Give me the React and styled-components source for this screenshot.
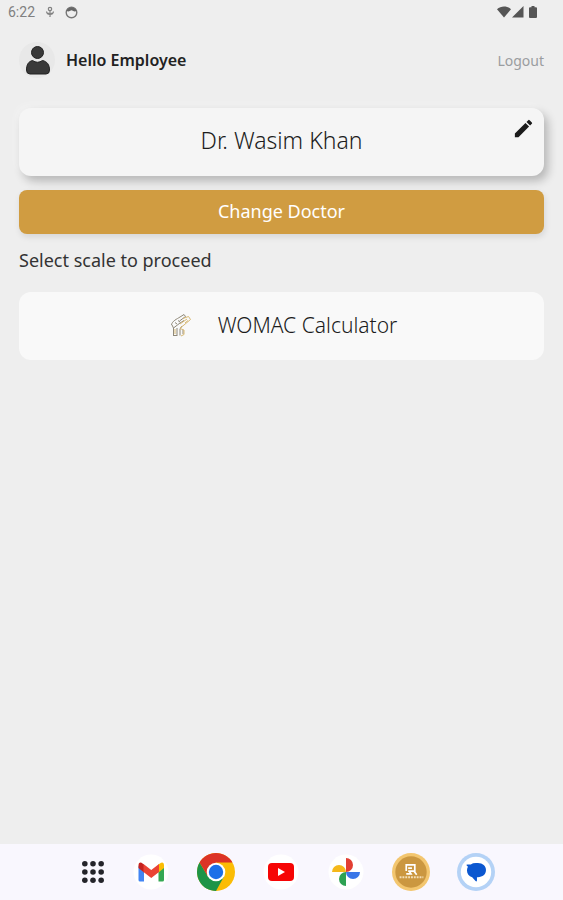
import styled, { createGlobalStyle } from 'styled-components';

const GlobalStyle=createGlobalStyle`
  * {
    box-sizing:border-box;
  }
  body {
    margin:0;
    background-color:#eeeeee;
    font-family:'Noto Sans', sans-serif;
    color:#333333;
  }
  button {
    font-family:inherit;
    color:inherit;
    border:none;
    padding:0;
    cursor:pointer;
  }
  svg {
    display:block;
  }
`
const Page=styled.div`
  min-height:100vh;
  display:flex;
  flex-direction:column;
`
const StatusBar=styled.div`
  height:24px;
  padding:0 26px 0 8px;
  display:flex;
  align-items:center;
  justify-content:space-between;
  font-family:Roboto, sans-serif;
  font-size:14px;
  color:#808080;
`
const StatusGroup=styled.div`
  display:flex;
  align-items:center;
  gap:${props=>props.$gap}px;
`
const Header=styled.header`
  height:72px;
  padding:0 19px;
  display:flex;
  align-items:center;
`
const Avatar=styled.div`
  width:36px;
  height:36px;
  border-radius:50%;
  background-color:#e8e8e8;
`
const Greeting=styled.h1`
  margin:0 auto 0 11px;
  font-size:16px;
  font-weight:600;
  color:#222222;
`
const Logout=styled.button`
  background:none;
  font-size:14px;
  color:#9a9da0;
`
const Main=styled.main`
  padding:12px 19px;
  display:flex;
  flex-direction:column;
`
const DoctorCard=styled.section`
  position:relative;
  height:68px;
  padding-bottom:4px;
  display:flex;
  align-items:center;
  justify-content:center;
  border-radius:12px;
  background-color:#f5f5f5;
  box-shadow:4px 5px 10px rgba(0,0,0,0.24), -3px -3px 8px rgba(255,255,255,0.3);
`
const DoctorName=styled.h2`
  margin:0;
  font-size:23px;
  font-weight:300;
  color:#1c1c1c;
`
const EditButton=styled.button`
  position:absolute;
  top:9px;
  right:9px;
  background:none;
`
const ChangeButton=styled.button`
  height:44px;
  padding-bottom:2px;
  margin-top:14px;
  border-radius:8px;
  background-color:#d09c41;
  color:white;
  font-size:18px;
  box-shadow:1px 3px 6px rgba(0,0,0,0.1);
`
const Prompt=styled.p`
  margin:12px 0 18px;
  font-size:18px;
  line-height:28px;
`
const ScaleButton=styled.button`
  height:68px;
  display:flex;
  align-items:center;
  justify-content:center;
  gap:26px;
  padding:0 0 2px 4px;
  border-radius:12px;
  background-color:#f9f9f9;
  font-size:21px;
  font-weight:300;
  color:#1c1c1c;
`
const Dock=styled.nav`
  height:56px;
  margin-top:auto;
  padding-left:13px;
  display:flex;
  align-items:center;
  justify-content:center;
  gap:27px;
  background-color:#f9f7fe;
`
const DockButton=styled.button`
  background:none;
`

function MicIcon() {
  return (
    <svg width="10" height="12" viewBox="0 0 10 12" fill="none" stroke="#808080">
      <circle cx="5" cy="3" r="1.7" strokeWidth="1.2"/>
      <path d="M5 5v6M1.5 5.5c.3 2 1.5 3 3.500 3s3.200-1 3.500-3M3 7l2 1.800L7 7" strokeWidth="1.200"/>
    </svg>
  );
}

function FaceIcon() {
  return (
    <svg width="13" height="13" viewBox="0 0 13 13">
      <circle cx="6.500" cy="6.500" r="5.300" fill="none" stroke="#777777" strokeWidth="1.400"/>
      <path d="M1.500 5A5.300 5.300 0 0 1 11.500 5L9.500 5.500 6.500 4.200 3.500 5.500z" fill="#666666"/>
    </svg>
  );
}

function WifiIcon() {
  return (
    <svg width="14" height="12" viewBox="0 0 14 12">
      <path d="M0 3.200C4 -.4 10 -.4 14 3.200L7 11.500z" fill="#555555"/>
    </svg>
  );
}

function SignalIcon() {
  return (
    <svg width="12" height="12" viewBox="0 0 12 12">
      <path d="M11.500 0v11.500H0z" fill="#555555"/>
    </svg>
  );
}

function BatteryIcon() {
  return (
    <svg width="12" height="12" viewBox="-4 0 12 12">
      <path d="M2.500 0h3v1.300h1.500q1 0 1 1v8.700q0 1-1 1H1q-1 0-1-1V2.300q0-1 1-1h1.500z" fill="#555555"/>
    </svg>
  );
}

function UserIcon() {
  return (
    <svg width="36" height="36" viewBox="0 0 36 36" fill="#393939" stroke="#222222">
      <circle cx="18.500" cy="10.500" r="6"/>
      <path d="M13.500 18.500Q18.500 22 23.500 18.500C28 19.500 30.500 22.500 30.500 28Q30.500 32 27 32H11Q7.500 32 7.500 28C7.500 22.500 9.500 19.500 13.500 18.500z"/>
    </svg>
  );
}

function PencilIcon() {
  return (
    <svg width="23" height="23" viewBox="0 0 24 24" fill="#1b1b1b">
      <path d="M3 17.250V21h3.750L17.810 9.940l-3.750-3.750zM20.710 7.040a1 1 0 0 0 0-1.410l-2.340-2.340a1 1 0 0 0-1.410 0l-1.830 1.830 3.750 3.750z"/>
    </svg>
  );
}

function JointIcon() {
  return (
    <svg width="22" height="24" viewBox="0 0 22 24" fill="none" strokeWidth="1">
      <g stroke="#8f8878">
        <path d="M1.500 12C2 8 7 6 10 4l4-2.500 1.500 2-6 4.500"/>
        <path d="M2 12l1.500 3L10 10l4-2.500M3.500 15v7.500M7 15v8M3 22.500h4"/>
        <path d="M5 9.500l2 1.500M8 7.500l2 1.500M12 13l-2 3v6.500M13 17v4"/>
      </g>
      <g stroke="#d8b974">
        <path d="M13 5.500l5.500-2 2 3L14 12l-4 3M10 11l7-5M5 16v5"/>
        <path d="M10 15.500l4 1.500v4.500l-3 1.500M15 10l3-2.500"/>
      </g>
    </svg>
  );
}

function AppsIcon() {
  const steps=[4, 12.5, 21];
  return (
    <svg width="24" height="24" viewBox="0 0 25 25" fill="#24242a">
      {steps.map(y=>steps.map(x=><circle key={x+'-'+y} cx={x} cy={y} r="2.900"/>))}
    </svg>
  );
}

function GmailIcon() {
  return (
    <svg width="38" height="38" viewBox="0 0 38 38">
      <circle cx="19" cy="19" r="17.500" fill="white"/>
      <path d="M6.500 13v14q0 1.500 1.500 1.500h4V16z" fill="#4285f4"/>
      <path d="M32 13v14q0 1.500-1.500 1.500h-4V16z" fill="#34a853"/>
      <path d="M26.500 11.500L29 9.700q3-1.200 3 2.300v3l-5.500 4.500z" fill="#fbbc04"/>
      <path d="M6.500 12q0-3.500 3-2.300L12 11.500v8L6.500 15z" fill="#c5221f"/>
      <path d="M11.500 11l7.750 6L27 11v8l-7.750 6L11.500 19z" fill="#ea4335"/>
    </svg>
  );
}

function ChromeIcon() {
  return (
    <svg width="38" height="38" viewBox="0 0 38 38">
      <circle cx="19" cy="19" r="19" fill="#fbbc05"/>
      <path d="M2.550 9.500A19 19 0 0 0 19 38L27 23.600 11 23.600z" fill="#1e9447"/>
      <path d="M2.550 9.500A19 19 0 0 1 35.450 9.500H19L11 23.600z" fill="#dc3326"/>
      <circle cx="19" cy="19" r="9.300" fill="white"/>
      <circle cx="19" cy="19" r="7.200" fill="#1b6fe8"/>
    </svg>
  );
}

function YoutubeIcon() {
  return (
    <svg width="38" height="38" viewBox="0 0 38 38">
      <circle cx="19" cy="19" r="17.500" fill="white"/>
      <rect x="6" y="10" width="26" height="18" rx="4" fill="#f60505"/>
      <path d="M16 15l7 4-7 4z" fill="white"/>
    </svg>
  );
}

function PhotosIcon() {
  return (
    <svg width="38" height="38" viewBox="0 0 38 38">
      <circle cx="19" cy="19" r="17.500" fill="white"/>
      <path d="M19 5a7 7 0 0 1 0 14z" fill="#e23e32"/>
      <path d="M33 19a7 7 0 0 1-14 0z" fill="#3976e8"/>
      <path d="M19 33a7 7 0 0 1 0-14z" fill="#2da253"/>
      <path d="M5 19a7 7 0 0 1 14 0z" fill="#f5b81a"/>
    </svg>
  );
}

function ScalesAppIcon() {
  return (
    <svg width="38" height="38" viewBox="0 0 40 40">
      <circle cx="20" cy="20" r="20" fill="#f3c66f"/>
      <circle cx="20" cy="20" r="16.500" fill="#cb9740"/>
      <path d="M15 19v-6.500h9v6.500h-7M17 16h4M23 19l3 4M15 22h5l-2-3" fill="none" stroke="white" strokeWidth="1.800"/>
      <path d="M8 25.500h25" stroke="#f3dfb8" strokeWidth="2.200" strokeDasharray="2 1"/>
    </svg>
  );
}

function MessagesIcon() {
  return (
    <svg width="38" height="38" viewBox="0 0 40 40">
      <circle cx="20" cy="20" r="20" fill="#b4d2f6"/>
      <circle cx="20" cy="20" r="16" fill="white"/>
      <path d="M11.500 14.500L10 13Q9.500 12 11 12h3.500Q16.500 10.500 20 10.500h2C27 10.500 30.500 13.500 30.500 18C30.500 22.500 27 25.500 22 25.500h-1v3.500q-.3 1.500-1.500.5L16 25.500C12.500 24.500 10.500 22 10.500 18.500Q10.500 16 11.500 14.500z" fill="#0b57d0"/>
    </svg>
  );
}

const apps=[
  { label:'All apps', Icon:AppsIcon },
  { label:'Gmail', Icon:GmailIcon },
  { label:'Chrome', Icon:ChromeIcon },
  { label:'YouTube', Icon:YoutubeIcon },
  { label:'Photos', Icon:PhotosIcon },
  { label:'Scales', Icon:ScalesAppIcon },
  { label:'Messages', Icon:MessagesIcon },
];

function App() {
  return (
    <Page>
      <GlobalStyle/>
      <StatusBar>
        <StatusGroup $gap={10}>
          <span>6:22</span>
          <MicIcon/>
          <FaceIcon/>
        </StatusGroup>
        <StatusGroup $gap={1}>
          <WifiIcon/>
          <SignalIcon/>
          <BatteryIcon/>
        </StatusGroup>
      </StatusBar>
      <Header>
        <Avatar><UserIcon/></Avatar>
        <Greeting>Hello Employee</Greeting>
        <Logout>Logout</Logout>
      </Header>
      <Main>
        <DoctorCard>
          <DoctorName>Dr. Wasim Khan</DoctorName>
          <EditButton aria-label="Edit doctor"><PencilIcon/></EditButton>
        </DoctorCard>
        <ChangeButton>Change Doctor</ChangeButton>
        <Prompt>Select scale to proceed</Prompt>
        <ScaleButton>
          <JointIcon/>
          <span>WOMAC Calculator</span>
        </ScaleButton>
      </Main>
      <Dock>
        {apps.map(({ label, Icon })=>
          <DockButton key={label} aria-label={label}><Icon/></DockButton>
        )}
      </Dock>
    </Page>
  );
}

export default App;
